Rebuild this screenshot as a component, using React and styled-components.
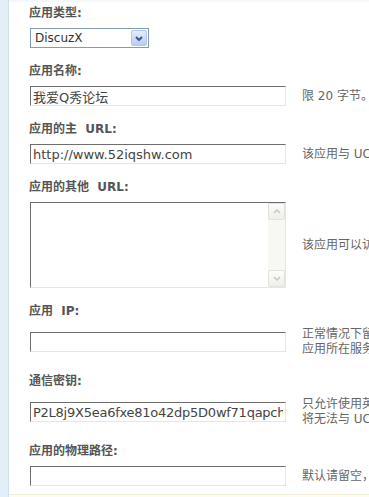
import styled, { createGlobalStyle } from 'styled-components';

const GlobalStyle = createGlobalStyle`
  html, body {
    margin: 0;
    padding: 0;
    height: 100%;
    overflow: hidden;
    background: #fff;
  }
  body {
    font: 12px "DejaVu Sans", "Noto Sans CJK SC", sans-serif;
  }
`;

const fields = [
  { label: '应用名称:', value: '我爱Q秀论坛', hint: ['限 20 字节。'] },
  {
    label: '应用的主\u00a0 URL:',
    value: 'http://www.52iqshw.com',
    hint: ['该应用与 UCenter 通信的接口 URL，结尾请不要加“/”，应用的通知只发送给主 URL'],
  },
];

const lowerFields = [
  {
    label: '应用\u00a0 IP:',
    value: '',
    hint: [
      '正常情况下留空即可。如果由于域名解析问题导致 UCenter 与该应用通信失败，请尝试设置为该',
      '应用所在服务器的 IP 地址。',
    ],
  },
  {
    label: '通信密钥:',
    value: 'P2L8j9X5ea6fxe81o42dp5D0wf71qapch',
    tight: true,
    hint: [
      '只允许使用英文字母及数字，限 64 字节。应用端的通信密钥必须与此设置保持一致，否则该应用',
      '将无法与 UCenter 正常通信。',
    ],
  },
  {
    label: '应用的物理路径:',
    value: '',
    hint: ['默认请留空，如果填写的为相对路径（相对于 UC），程序会自动转换为绝对路径'],
  },
];

function Chevron({ up, color, weight = 1.6 }) {
  return (
    <svg width="8" height="5" viewBox="0 0 8 5">
      <path
        d={up ? 'M1 4 L4 1 L7 4' : 'M1 1 L4 4 L7 1'}
        fill="none"
        stroke={color}
        strokeWidth={weight}
      />
    </svg>
  );
}

function Field({ label, value, hint, tight }) {
  return (
    <FieldBlock>
      <Label>{label}</Label>
      <Row>
        <TextInput defaultValue={value} $tight={tight} />
        <Hint>
          {hint.map((line, i) => (
            <div key={i}>{line}</div>
          ))}
        </Hint>
      </Row>
    </FieldBlock>
  );
}

export default function App() {
  return (
    <>
      <GlobalStyle />
      <Page>
        <Side />
        <Main>
          <FieldBlock>
            <Label>应用类型:</Label>
            <Row>
              <SelectBox>
                <SelectText>DiscuzX</SelectText>
                <DropButton>
                  <Chevron color="#3f5482" weight={2} />
                </DropButton>
              </SelectBox>
            </Row>
          </FieldBlock>

          {fields.map((f) => (
            <Field key={f.label} {...f} />
          ))}

          <FieldBlock>
            <Label>{'应用的其他\u00a0 URL:'}</Label>
            <Row>
              <TextBox>
                <TextArea />
                <ScrollTrack>
                  <ArrowButton>
                    <Chevron up color="#c9c9c2" />
                  </ArrowButton>
                  <ArrowButton>
                    <Chevron color="#c9c9c2" />
                  </ArrowButton>
                </ScrollTrack>
              </TextBox>
              <Hint>
                <div>该应用可以访问的其他地址，例如 http://www.example.com，每行一个</div>
              </Hint>
            </Row>
          </FieldBlock>

          {lowerFields.map((f) => (
            <Field key={f.label} {...f} />
          ))}

          <Footer />
        </Main>
      </Page>
    </>
  );
}

const Page = styled.div`
  display: flex;
  height: 100vh;
  overflow: hidden;
`;

const Side = styled.div`
  width: 8px;
  flex: none;
  background: #e2eff9;
  border-right: 1px solid #cfe2f1;
`;

const Main = styled.div`
  flex: 1;
  min-width: 0;
  display: flex;
  flex-direction: column;
  border-top: 2px solid #f3f8fc;
  padding: 4px 0 0 20px;
  overflow: hidden;
`;

const FieldBlock = styled.div`
  & + & {
    margin-top: 16px;
  }
`;

const Label = styled.div`
  font-weight: bold;
  line-height: 14px;
  color: #555;
  white-space: pre;
`;

const Row = styled.div`
  display: grid;
  grid-template-columns: 272px max-content;
  align-items: center;
  margin-top: 8px;
  padding-left: 1px;
`;

const TextInput = styled.input`
  width: 256px;
  height: 20px;
  box-sizing: border-box;
  border: 1px solid;
  border-color: #6e6e6e #e6e6e6 #e6e6e6 #6e6e6e;
  padding: 0 2px;
  font: 13px "DejaVu Sans", "Noto Sans CJK SC", sans-serif;
  letter-spacing: ${(p) => (p.$tight ? '-0.25px' : '0')};
  color: #444;
  background: #fff;
  outline: none;
`;

const Hint = styled.div`
  color: #666;
  line-height: 15px;
  padding: 1px 0;
  white-space: nowrap;
`;

const SelectBox = styled.div`
  width: 119px;
  height: 20px;
  box-sizing: border-box;
  border: 1px solid #7f9db9;
  padding: 1px;
  display: flex;
  align-items: center;
  background: #fff;
`;

const SelectText = styled.span`
  flex: 1;
  padding-left: 3px;
  font: 12px "DejaVu Sans", sans-serif;
  color: #333;
`;

const DropButton = styled.div`
  width: 16px;
  height: 16px;
  box-sizing: border-box;
  border: 1px solid #b3c7f4;
  border-radius: 2px;
  background: linear-gradient(#e4edfe, #b8ccf9);
  display: flex;
  align-items: center;
  justify-content: center;
`;

const TextBox = styled.div`
  width: 256px;
  height: 86px;
  box-sizing: border-box;
  border: 1px solid;
  border-color: #6e6e6e #e6e6e6 #e6e6e6 #6e6e6e;
  display: flex;
  background: #fff;
`;

const TextArea = styled.textarea`
  flex: 1;
  min-width: 0;
  border: none;
  resize: none;
  outline: none;
  padding: 2px;
  font: 13px "DejaVu Sans", sans-serif;
  color: #444;
`;

const ScrollTrack = styled.div`
  width: 17px;
  flex: none;
  display: flex;
  flex-direction: column;
  justify-content: space-between;
  background: #f8f8f3;
`;

const ArrowButton = styled.div`
  height: 17px;
  box-sizing: border-box;
  border: 1px solid #e2e2dc;
  border-radius: 2px;
  background: linear-gradient(#fcfcfa, #efefe9);
  display: flex;
  align-items: center;
  justify-content: center;
`;

const Footer = styled.div`
  margin: 8px 0 0 -20px;
  flex: 1;
  min-height: 20px;
  background: #fdfcee;
  border-top: 1px solid #f0eed8;
`;
